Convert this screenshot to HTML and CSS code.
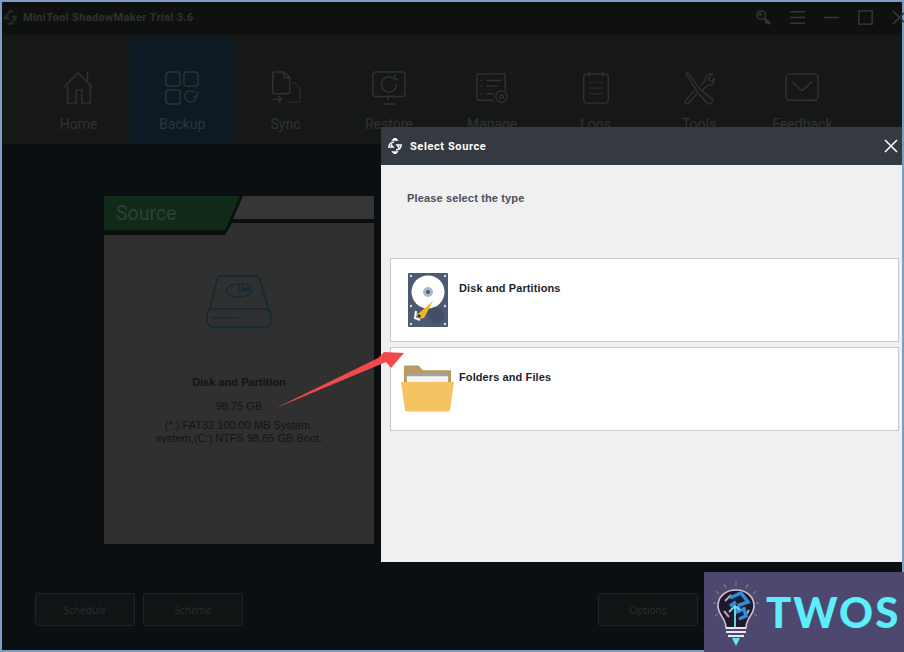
FILE: index.html
```html
<!DOCTYPE html>
<html lang="en">
<head>
    <meta charset="UTF-8">
    <meta name="viewport" content="width=device-width, initial-scale=1.0">
    <title>Select Source</title>
    <link rel="stylesheet" href="styles.css">
</head>
<body>
    <div class="app">
        <header class="titlebar">
            <svg class="app-logo" viewBox="0 0 16 16"><path d="M8 0l2 2H6zM8 16l2-2H6zM2 8a6 5 0 0 1 5-4M14 8a6 5 0 0 1-5 4M1 9h5L4 6.500M15 7h-5l2 2.500" /></svg>
            <span class="app-title">MiniTool ShadowMaker Trial 3.6</span>
            <div class="win-controls">
                <svg viewBox="0 0 18 18"><circle cx="6.500" cy="6.500" r="4.500"/><circle cx="5.500" cy="5.500" r="1"/><path d="M10 10l6 6M13 13l-1.500 2" stroke-width="2.500"/></svg>
                <svg viewBox="0 0 18 18"><path d="M1 3h16M1 9h16M1 15h16"/></svg>
                <svg viewBox="0 0 18 18"><path d="M1 9h16"/></svg>
                <svg viewBox="0 0 18 18"><rect x="2" y="2" width="14" height="14"/></svg>
                <svg class="win-close" viewBox="0 0 18 18"><path d="M2 2l14 14M16 2L2 16"/></svg>
            </div>
        </header>

        <nav class="nav">
            <div class="nav-item">
                <svg viewBox="0 0 36 36"><path d="M2 17L17 2l15 15M27 1v9M6 15v19h9V20h6v14h9V15"/></svg>
                <span>Home</span>
            </div>
            <div class="nav-item active">
                <svg viewBox="0 0 36 36"><rect x="1" y="1" width="15" height="15" rx="3"/><rect x="20" y="1" width="15" height="15" rx="3"/><rect x="1" y="20" width="15" height="15" rx="3"/><path d="M33 27a6 6 0 1 1-2-4.500M34 22v5h-4"/></svg>
                <span>Backup</span>
            </div>
            <div class="nav-item">
                <svg viewBox="0 0 36 36"><path d="M5 3a2 2 0 0 1 2-2h10l6 6v15a2 2 0 0 1-2 2H7a2 2 0 0 1-2-2zM17 1v6h6"/><path class="faint" d="M26 13h3l5 6v12a2 2 0 0 1-2 2H21"/><path d="M5 30h9M11 27l3 3-3 3"/></svg>
                <span>Sync</span>
            </div>
            <div class="nav-item">
                <svg viewBox="0 0 36 36"><rect x="1" y="1" width="34" height="26" rx="3"/><path d="M12 35h12M17 27v4M26 14a8 8 0 1 1-3-6M24 4v5h4"/></svg>
                <span>Restore</span>
            </div>
            <div class="nav-item">
                <svg viewBox="0 0 36 36"><path d="M20 31H4a2 2 0 0 1-2-2V5a2 2 0 0 1 2-2h28v18M6 10h2M12 10h16M6 16h2M12 16h12M6 24h2M12 24h8"/><circle cx="28" cy="27" r="6"/><circle cx="28" cy="27" r="2"/></svg>
                <span>Manage</span>
            </div>
            <div class="nav-item">
                <svg viewBox="0 0 36 36"><rect x="5" y="3" width="26" height="31" rx="4"/><path d="M11 1v5M25 1v5"/><path class="faint" d="M10 12h16M10 18h16M10 24h16"/></svg>
                <span>Logs</span>
            </div>
            <div class="nav-item">
                <svg viewBox="0 0 36 36"><path d="M4 3l2-1 14 18 11 9a2.500 2.500 0 0 1-4 5L17 23zM20 15l5-5c-1-4 2-8 7-7l-4 4 1 3 3 1 2-3c1 5-3 8-7 7l-5 5M13 21L4 31a2 2 0 0 0 3 3l9-10"/></svg>
                <span>Tools</span>
            </div>
            <div class="nav-item">
                <svg viewBox="0 0 36 36"><rect x="1" y="3" width="34" height="28" rx="4"/><path d="M7 11l11 10 11-10"/></svg>
                <span>Feedback</span>
            </div>
        </nav>

        <main class="main">
            <section class="source">
                <div class="source-tab-back"></div>
                <div class="source-tab"><span>Source</span></div>
                <div class="source-card">
                    <svg class="disk-icon" viewBox="0 0 66 54"><path d="M3 36L11 5a5 5 0 0 1 5-4h33a5 5 0 0 1 5 4l9 31"/><rect x="1" y="34" width="64" height="18" rx="6"/><path d="M6 43h26M49 43h1.500M54 43h1.500M59 43h1.500"/><path d="M33 9c-7 0-13 3-13 6.500S26 22 33 22s13-3 13-6.500H33z"/><path d="M36 14V9c4 0 8 1 9 4z"/></svg>
                    <h3>Disk and Partition</h3>
                    <p class="size">98.75 GB</p>
                    <p class="parts">(*:).FAT32 100.00 MB System.<br>system,(C:).NTFS 98.65 GB Boot.</p>
                </div>
            </section>
            <footer class="actions">
                <button class="btn">Schedule</button>
                <button class="btn">Scheme</button>
                <button class="btn btn-options">Options</button>
            </footer>
        </main>
    </div>

    <div class="dialog">
        <div class="dialog-head">
            <svg class="dialog-logo" viewBox="0 0 16 16"><path d="M8 0l2 2H6zM8 16l2-2H6zM2 8a6 5 0 0 1 5-4M14 8a6 5 0 0 1-5 4M1 9h5L4 6.500M15 7h-5l2 2.500"/></svg>
            <span class="dialog-title">Select Source</span>
            <svg class="dialog-close" viewBox="0 0 14 14"><path d="M1 1l12 12M13 1L1 13"/></svg>
        </div>
        <div class="dialog-body">
            <p class="prompt">Please select the type</p>
            <div class="choice">
                <svg class="hdd" viewBox="0 0 40 54">
                    <rect width="40" height="54" rx="1" fill="#4b5a72"/>
                    <circle cx="20" cy="19" r="16.500" fill="#fff"/>
                    <circle cx="20" cy="19" r="5" fill="#aeb6c2"/>
                    <circle cx="20" cy="19" r="2" fill="#4b5a72"/>
                    <circle cx="28" cy="42" r="8" fill="#434f66"/>
                    <path d="M11 40l14-12-9 17-6 1-2-5z" fill="#f0b81c"/>
                    <path d="M8 38l-1 7 5 2" fill="none" stroke="#fff" stroke-width="2"/>
                    <circle cx="11" cy="43" r="1.800" fill="#2d3a52"/>
                    <g fill="#d8dce2"><circle cx="3" cy="3" r="1.200"/><circle cx="37" cy="3" r="1.200"/><circle cx="3" cy="33" r="1.200"/><circle cx="37" cy="33" r="1.200"/><circle cx="3" cy="51" r="1.200"/><circle cx="37" cy="51" r="1.200"/></g>
                </svg>
                <span>Disk and Partitions</span>
            </div>
            <div class="choice">
                <svg class="folder" viewBox="0 0 54 48">
                    <path d="M3 20V2a1 1 0 0 1 1-1h14l4 5h28a1 1 0 0 1 1 1v14z" fill="#b99a62"/>
                    <rect x="7" y="9" width="40" height="8" fill="#a3a3a3"/>
                    <rect x="6" y="12" width="42" height="8" fill="#f4f4f4"/>
                    <path d="M0 18h54l-4 28a2 2 0 0 1-2 2H6a2 2 0 0 1-2-2z" fill="#f5c462"/>
                </svg>
                <span>Folders and Files</span>
            </div>
        </div>
    </div>

    <svg class="arrow" viewBox="0 0 132 60"><polygon points="1,57 103,7 109,1 129,2 116,17 111,11" fill="#f24a4c"/></svg>

    <div class="badge">
        <svg class="bulb" viewBox="0 0 48 66">
            <g stroke="#76788f" stroke-width="1.300" fill="none"><path d="M24 0v5M12 3l2 4M36 3l-2 4M4 10l3 3M44 10l-3 3M1 22h3M47 22h-3M3 35l3-2M45 35l-3-2"/></g>
            <path d="M24 9C13 9 6 16 6 25c0 6 4 10 6 14 1 2 2 5 2 8h20c0-3 1-6 2-8 2-4 6-8 6-14 0-9-7-16-18-16z" fill="#1c1a2c" stroke="#d5c3cf" stroke-width="1.600"/>
            <path d="M13 20l6-6M12 30l5 6M34 34l3-5" stroke="#b9a2b4" stroke-width="2"/>
            <path d="M18 17l11-5 7 9-9 3-2 7 7-3 2 7-7 3M18 25l6-4" fill="none" stroke="#2b8fdc" stroke-width="3.500"/>
            <path d="M23 25v22M17 31l6-6 5 4" fill="none" stroke="#6fe3f5" stroke-width="1.800"/>
            <path d="M14 47h20M14 51h20M16 55h16" stroke="#e9e9ef" stroke-width="2"/>
            <path d="M20 57h8l-4 8z" fill="#5feaf5"/>
        </svg>
        <span class="badge-text">TWOS</span>
    </div>
</body>
</html>
```

FILE: styles.css
```css
html, body {
    height: 100%;
    margin: 0;
    padding: 0;
}
body {
    position: relative;
    width: 904px;
    height: 652px;
    overflow: hidden;
    background: #7d9fc3;
    font-family: "Liberation Sans", Arial, sans-serif;
}
svg {
    display: block;
    fill: none;
}
.app {
    display: flex;
    flex-direction: column;
    width: 900px;
    height: 648px;
    margin: 2px;
    background: #0b0f11;
}

/* title bar */
.titlebar {
    display: flex;
    align-items: center;
    height: 33px;
    box-sizing: border-box;
    padding-bottom: 3px;
    flex-shrink: 0;
    background: #0f1111;
}
.app-logo {
    width: 15px;
    height: 15px;
    margin-left: 1px;
    stroke: #2a2c2c;
    stroke-width: 1.500;
}
.app-title {
    margin-left: 5px;
    font-family: Roboto, sans-serif;
    font-size: 11px;
    font-weight: 700;
    letter-spacing: 0.38px;
    color: #2f3131;
}
.win-controls {
    display: flex;
    gap: 17px;
    margin-left: auto;
    margin-right: -2px;
}
.win-controls svg {
    width: 17px;
    height: 17px;
    stroke: #343636;
    stroke-width: 1.600;
}
.win-close {
    margin-right: -4px;
}

/* top nav */
.nav {
    display: flex;
    height: 109px;
    flex-shrink: 0;
    padding-left: 25px;
    background: #161818;
}
.nav-item {
    display: flex;
    flex-direction: column;
    align-items: center;
    width: 103.400px;
    padding-top: 36px;
    box-sizing: border-box;
    font-family: Roboto, sans-serif;
    font-size: 14px;
    line-height: 16px;
    color: #313333;
}
.nav-item svg {
    width: 34px;
    height: 34px;
    margin-bottom: 11px;
    stroke: #313333;
    stroke-width: 1.500;
}
.nav-item .faint {
    stroke: #262828;
}
.nav-item.active {
    background: #0d1a24;
}

/* left side */
.main {
    display: flex;
    flex-direction: column;
    flex: 1;
}
.source {
    position: relative;
    width: 270px;
    height: 348px;
    margin: 52px 0 0 102px;
}
.source-tab {
    position: absolute;
    top: 0;
    left: 0;
    width: 136px;
    height: 34px;
    box-sizing: border-box;
    padding: 6px 0 0 12px;
    background: #0f2a16;
    clip-path: polygon(0 0, 100% 0, 89% 100%, 0 100%);
    font-family: Roboto, sans-serif;
    font-size: 19.500px;
    line-height: 24px;
    color: #2f4035;
}
.source-tab-back {
    position: absolute;
    top: 0;
    left: 129px;
    width: 141px;
    height: 23px;
    background: #363636;
    clip-path: polygon(10px 0, 100% 0, 100% 100%, 0 100%);
}
.source-card {
    display: flex;
    flex-direction: column;
    align-items: center;
    height: 348px;
    box-sizing: border-box;
    padding-top: 79px;
    background: #303030;
    clip-path: polygon(0 39px, 121px 39px, 128px 27px, 100% 27px, 100% 100%, 0 100%);
    color: #131313;
    font-size: 11px;
}
.disk-icon {
    width: 66px;
    height: 54px;
    stroke: #102a38;
    stroke-width: 1.500;
}
.source-card h3 {
    margin: 46px 0 0;
    font-size: 11px;
    line-height: 14px;
}
.size {
    margin: 10px 0 0;
    font-size: 11px;
    line-height: 14px;
}
.parts {
    margin: 6px 0 0;
    font-size: 11px;
    line-height: 13px;
    text-align: center;
}
.actions {
    display: flex;
    gap: 8px;
    margin-top: auto;
    padding: 0 0 24px 33px;
}
.btn {
    width: 100px;
    height: 33px;
    padding: 0;
    background: #111414;
    border: 1px solid #212424;
    border-radius: 3px;
    font-family: "Open Sans", sans-serif;
    font-size: 10px;
    color: #2b2e2e;
}
.btn-options {
    margin-left: 347px;
}

/* dialog on top */
.dialog {
    position: absolute;
    top: 127px;
    left: 381px;
    display: flex;
    flex-direction: column;
    width: 521px;
    height: 435px;
}
.dialog-head {
    display: flex;
    align-items: center;
    height: 38px;
    flex-shrink: 0;
    background: #343a40;
    color: #fff;
}
.dialog-logo {
    width: 16px;
    height: 16px;
    margin-left: 6px;
    stroke: #fff;
    stroke-width: 1.500;
    fill: none;
}
.dialog-title {
    margin-left: 7px;
    font-family: Roboto, sans-serif;
    font-size: 11px;
    font-weight: 700;
    letter-spacing: 0.6px;
}
.dialog-close {
    width: 14px;
    height: 14px;
    margin-left: auto;
    margin-right: 4px;
    stroke: #fff;
    stroke-width: 1.500;
}
.dialog-body {
    display: flex;
    flex-direction: column;
    flex: 1;
    gap: 5px;
    padding: 0 3px 0 9px;
    background: #f0f0f0;
}
.prompt {
    margin: 26px 0 48px 17px;
    font-size: 11px;
    font-weight: 700;
    line-height: 14px;
    letter-spacing: 0.14px;
    color: #4a4f5c;
}
.choice {
    position: relative;
    display: flex;
    height: 84px;
    box-sizing: border-box;
    padding: 22px 0 0 68px;
    background: #fff;
    border: 1px solid #c9c9c9;
    font-size: 11px;
    font-weight: 700;
    line-height: 14px;
    letter-spacing: 0.1px;
    color: #1c1f2b;
}
.hdd {
    position: absolute;
    top: 14px;
    left: 17px;
    width: 40px;
    height: 54px;
}
.folder {
    position: absolute;
    top: 16px;
    left: 10px;
    width: 53px;
    height: 48px;
}

.arrow {
    position: absolute;
    top: 351px;
    left: 275px;
    width: 132px;
    height: 60px;
}

/* watermark */
.badge {
    position: absolute;
    top: 572px;
    left: 704px;
    display: flex;
    width: 200px;
    height: 80px;
    box-sizing: border-box;
    padding: 9px 0 0 8px;
    background: #4c4870;
}
.bulb {
    width: 48px;
    height: 66px;
}
.badge-text {
    margin: 7px 0 0 6px;
    font-family: Lato, sans-serif;
    font-size: 42px;
    font-weight: 900;
    line-height: 48px;
    letter-spacing: 2px;
    color: #5ceefb;
}
```
